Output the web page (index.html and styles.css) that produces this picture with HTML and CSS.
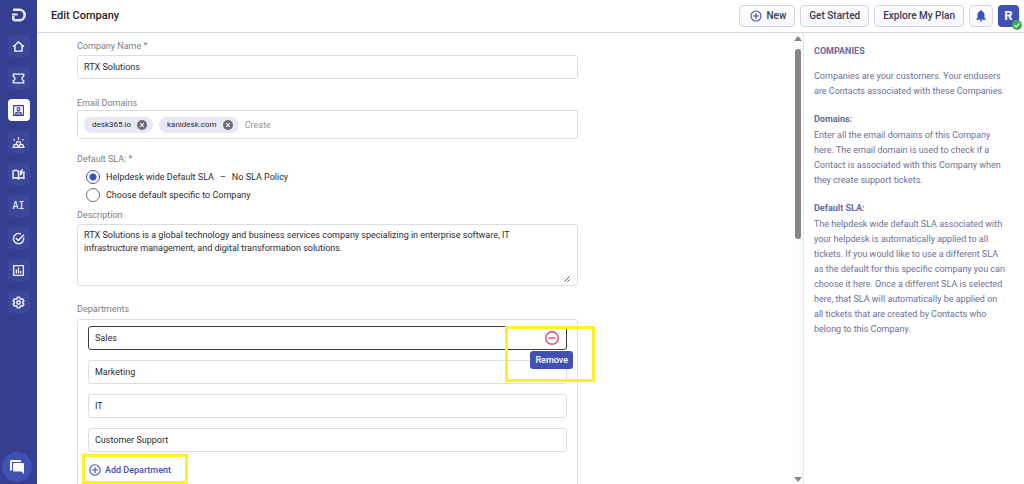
FILE: index.html
```html
<!DOCTYPE html>
<html lang="en">
<head>
<meta charset="utf-8">
<title>Edit Company</title>
<link rel="stylesheet" href="styles.css">
</head>
<body>
<nav class="rail" aria-label="Main">
  <a class="logo" href="#" aria-label="Home page"><svg width="16" height="16" viewBox="0 0 16 16" fill="none" stroke="#e8ecff"><path d="M2 2.800H8.500A5.200 5.200 0 0 1 8.500 13.200H4.500" stroke-width="2.600"/><path d="M1 7.500h5.500" stroke-width="2"/><path d="M2.200 9v2.500q0 1.700 2.600 1.700" stroke-width="2.400"/></svg></a>
  <a class="item" href="#" aria-label="Dashboard"><svg viewBox="0 0 24 24" fill="none" stroke="currentColor" stroke-width="2.600"><path d="M2 12.500 12 3.500l10 9M5.500 10v10.500h13V10"/></svg></a>
  <a class="item" href="#" aria-label="Tickets"><svg viewBox="0 0 24 24" fill="none" stroke="currentColor" stroke-width="2.600"><path d="M2.500 4h19v4c-4 1-4 7 0 8v4h-19v-4c4-1 4-7 0-8z"/></svg></a>
  <a class="item active" href="#" aria-label="Contacts"><svg viewBox="0 0 24 24" fill="none" stroke="currentColor" stroke-width="2"><path d="M3 3h18v18H3z"/><circle cx="12" cy="9.500" r="2.800"/><path d="M6 18.500c1-5 11-5 12 0z"/></svg></a>
  <a class="item" href="#" aria-label="Assets"><svg viewBox="0 0 24 24" fill="none" stroke="currentColor" stroke-width="2.200"><path d="M2 21l2-5h6l2 5zM12 21l2-5h6l2 5zM7.500 15l1.500-4h6l1.500 4M12 7V2M5 8 3 6M19 8l2-2"/></svg></a>
  <a class="item" href="#" aria-label="Knowledge base"><svg viewBox="0 0 24 24" fill="none" stroke="currentColor" stroke-width="2.600"><path d="M12 20V6C9 4 5 4 2 5.500V19c3-1.200 7-1.200 10 1 3-2.200 7-2.200 10-1V6"/><path d="M14.500 15V6l5-5v9z" fill="currentColor" stroke="none"/></svg></a>
  <a class="item ai" href="#">AI</a>
  <a class="item" href="#" aria-label="Tasks"><svg viewBox="0 0 24 24" fill="none" stroke="currentColor" stroke-width="2.600"><path d="M21.500 10.500A9.500 9.500 0 1 1 16.500 3.700M7 11l4.500 4.500L22 5"/></svg></a>
  <a class="item" href="#" aria-label="Reports"><svg viewBox="0 0 24 24" fill="none" stroke="currentColor" stroke-width="2.400"><path d="M3 3h18v18H3zM8 17.500V10M12 17.500V6.500M16 17.500V13"/></svg></a>
  <a class="item" href="#" aria-label="Settings"><svg viewBox="0 0 24 24" fill="none" stroke="currentColor" stroke-width="2.600" stroke-linejoin="round"><path d="M9.800 2h4.400l.6 3 2 1.200 2.900-1 2.200 3.800-2.300 2v2l2.300 2-2.200 3.800-2.900-1-2 1.200-.6 3H9.800l-.6-3-2-1.200-2.900 1L2.100 15l2.300-2v-2L2.100 9l2.200-3.800 2.900 1 2-1.200z"/><circle cx="12" cy="12" r="3.200"/></svg></a>
  <button class="chat" type="button" aria-label="Chat"><svg width="14" height="14" viewBox="0 0 14 14" fill="#fff"><path d="M1 0h9q1 0 1 1v1H2v8L0 11V1q0-1 1-1zM4 3h9q1 0 1 1v10l-2.500-2.500H4q-1 0-1-1V4q0-1 1-1z"/></svg></button>
</nav>
<div class="page">
  <header class="top">
    <h1>Edit Company</h1>
    <button class="btn" type="button"><svg width="12" height="12" viewBox="0 0 12 12" fill="none" stroke="#3f51b5" stroke-width="1.100"><circle cx="6" cy="6" r="5"/><path d="M6 3v6M3 6h6"/></svg>New</button>
    <button class="btn" type="button">Get Started</button>
    <button class="btn" type="button">Explore My Plan</button>
    <button class="btn bell" type="button" aria-label="Notifications"><svg width="10" height="12" viewBox="0 0 10 12" fill="#3f51b5"><path d="M5 0a.9.9 0 0 1 .9.900v.4C7.600 1.700 8.500 3.200 8.500 5v2.800L9.800 9v.7H.2V9l1.300-1.200V5c0-1.800.9-3.300 2.600-3.700v-.4A.9.9 0 0 1 5 0zM3.800 10.300h2.400a1.200 1.200 0 0 1-2.400 0z"/></svg></button>
    <button class="avatar" type="button">R<svg class="status" width="10" height="10" viewBox="0 0 10 10"><circle cx="5" cy="5" r="5" fill="#3fae49"/><path d="M2.500 5.200 4.300 7l3.200-3.600" fill="none" stroke="#fff" stroke-width="1.200"/></svg></button>
  </header>
  <div class="body">
    <main class="scroll">
      <form class="form">
        <label for="name">Company Name *</label>
        <input class="field" id="name" type="text" value="RTX Solutions">
        <label for="domains">Email Domains</label>
        <div class="chips">
          <span class="chip">desk365.io<button type="button" aria-label="Remove desk365.io"><svg width="10" height="10" viewBox="0 0 10 10"><circle cx="5" cy="5" r="5" fill="#6d6d78"/><path d="m3.200 3.200 3.600 3.600m0-3.600L3.200 6.800" stroke="#ececf6" stroke-width="1.200"/></svg></button></span>
          <span class="chip">kanidesk.com<button type="button" aria-label="Remove kanidesk.com"><svg width="10" height="10" viewBox="0 0 10 10"><circle cx="5" cy="5" r="5" fill="#6d6d78"/><path d="m3.200 3.200 3.600 3.600m0-3.600L3.200 6.800" stroke="#ececf6" stroke-width="1.200"/></svg></button></span>
          <input id="domains" type="text" placeholder="Create">
        </div>
        <fieldset class="sla">
          <legend>Default SLA: *</legend>
          <label class="choice"><input type="radio" name="sla" checked><span>Helpdesk wide Default SLA</span><span>–</span><span>No SLA Policy</span></label>
          <label class="choice"><input type="radio" name="sla"><span>Choose default specific to Company</span></label>
        </fieldset>
        <label for="desc">Description</label>
        <div class="area"><textarea id="desc">RTX Solutions is a global technology and business services company specializing in enterprise software, IT
infrastructure management, and digital transformation solutions.</textarea>
        <svg class="grip" width="6" height="6" viewBox="0 0 6 6" stroke="#555" stroke-width="1"><path d="M.5 5.500l5-5M3.500 5.500l2-2"/></svg></div>
        <fieldset class="departments">
          <legend>Departments</legend>
          <div class="list">
            <div class="row">
              <input class="field current" type="text" aria-label="Department 1" value="Sales">
              <div class="callout"></div>
              <button class="minus" type="button" aria-label="Remove Sales"><svg width="14" height="14" viewBox="0 0 14 14" fill="none" stroke="#e0457b" stroke-width="1.400"><circle cx="7" cy="7" r="6.200"/><path d="M3.500 7h7"/></svg></button>
              <span class="tip" role="tooltip">Remove</span>
            </div>
            <input class="field" type="text" aria-label="Department 2" value="Marketing">
            <input class="field" type="text" aria-label="Department 3" value="IT">
            <input class="field" type="text" aria-label="Department 4" value="Customer Support">
            <button class="add" type="button"><svg width="12" height="12" viewBox="0 0 12 12" fill="none" stroke="#3f51b5" stroke-width="1.100"><circle cx="6" cy="6" r="5.200"/><path d="M6 3v6M3 6h6"/></svg>Add Department</button>
          </div>
        </fieldset>
      </form>
    </main>
    <div class="bar" aria-hidden="true"><i class="up"></i><i class="thumb"></i><i class="down"></i></div>
    <aside class="help">
      <h2>COMPANIES</h2>
      <p>Companies are your customers. Your endusers are Contacts associated with these Companies.</p>
      <h3>Domains:</h3>
      <p>Enter all the email domains of this Company here. The email domain is used to check if a Contact is associated with this Company when they create support tickets.</p>
      <h3>Default SLA:</h3>
      <p>The helpdesk wide default SLA associated with your helpdesk is automatically applied to all tickets. If you would like to use a different SLA as the default for this specific company you can choose it here. Once a different SLA is selected here, that SLA will automatically be applied on all tickets that are created by Contacts who belong to this Company.</p>
    </aside>
  </div>
</div>
</body>
</html>
```

FILE: styles.css
```css
* { box-sizing: border-box; }
body { margin: 0; height: 100vh; display: flex; overflow: hidden; background: #fff; color: #2b2b2f; font: 9px/14px Roboto, sans-serif; }
button, input, textarea { font: inherit; color: inherit; margin: 0; padding: 0; border: 0; background: none; outline: 0; }
svg { display: block; flex: none; }
.rail { flex: none; width: 37px; background: #343f91; display: flex; flex-direction: column; align-items: center; padding: 7px 0 2px; gap: 10px; }
.logo { margin-bottom: 2px; }
.item { width: 22px; height: 22px; border-radius: 4px; background: #3b479a; color: #f2f4ff; display: flex; align-items: center; justify-content: center; text-decoration: none; }
.item svg { width: 13px; height: 13px; }
.active { background: #fff; color: #343f91; }
.ai { font: 10px/14px "DejaVu Sans Mono", monospace; }
.chat { width: 30px; height: 30px; flex: none; border-radius: 50%; background: #3f51b5; margin: auto 4px 0 0; display: flex; align-items: center; justify-content: center; }
.page { flex: 1; min-width: 0; display: flex; flex-direction: column; }
.top { flex: none; height: 33px; border-bottom: 1px solid #d6d6da; display: flex; align-items: center; gap: 5px; padding: 0 5px 0 14px; font-size: 10px; }
h1 { margin: 0 auto 0 0; font-size: 11px; line-height: 16px; font-weight: 500; color: #1f1f24; }
.btn { height: 22px; padding: 0 8px; border: 1px solid #d5d5e0; border-radius: 4px; background: linear-gradient(#fff, #f6f6fc); font-weight: 500; display: flex; align-items: center; gap: 4px; color: #363a52; }
.btn svg { margin-left: 2px; }
.bell { padding: 0 6px 0 4px; }
.avatar { position: relative; width: 21px; height: 22px; border-radius: 4px; background: #3f51b5; color: #fff; font-size: 13px; font-weight: 700; }
.status { position: absolute; right: -3px; bottom: -3px; }
.body { flex: 1; min-height: 0; display: flex; }
.scroll { flex: 1; min-width: 0; overflow: hidden; padding: 6px 20px 0 40px; }
.form { max-width: 501px; display: flex; flex-direction: column; color: #2b2b2f; }
.form > label, legend { color: #7d7d82; padding: 0; }
.field { width: 100%; height: 24px; border: 1px solid #dedee2; border-radius: 3px; padding: 0 6px; display: block; }
.form > .field { margin: 2px 0 17px; }
.chips { border: 1px solid #dedee2; border-radius: 3px; height: 29px; padding: 0 6px; display: flex; align-items: center; gap: 6px; }
.chips input { flex: 1; min-width: 0; }
.chips input::placeholder { color: #97979b; opacity: 1; }
.chip { height: 16px; border-radius: 8px; background: #e8e8f3; padding: 0 6px 0 8px; display: flex; align-items: center; gap: 6px; font-size: 8px; }
fieldset { margin: 0; padding: 0; border: 0; min-width: 0; }
.sla { margin: 13px 0 4px; }
.sla legend { margin-bottom: 2px; }
.choice { display: flex; align-items: center; gap: 6px; height: 18px; padding-left: 9px; }
.choice input { appearance: none; width: 14px; height: 14px; border: 1px solid #707074; border-radius: 50%; }
.choice input:checked { border: 1px solid #3f51b5; background: radial-gradient(#3f51b5 0 3px, #fff 4px); }
.area { position: relative; margin-top: 2px; }
textarea { display: block; width: 100%; height: 62px; border: 1px solid #dedee2; border-radius: 3px; padding: 4px 6px; resize: none; line-height: 13px; }
.grip { position: absolute; right: 8px; bottom: 4px; }
.departments { margin-top: 16px; }
.list { margin-top: 3px; border: 1px solid #dedee2; border-radius: 3px; padding: 6px 10px; display: flex; flex-direction: column; align-items: flex-start; gap: 10px; }
.row { position: relative; width: 100%; }
.current { border-color: #3b3b40; }
.callout { position: absolute; z-index: 1; top: 0; right: -28px; width: 90px; height: 56px; border: 3px solid #fff02a; }
.minus { position: absolute; z-index: 2; right: 8px; top: 5px; }
.tip { position: absolute; z-index: 2; right: -6px; top: 25px; padding: 2px 5px; background: #3f51b5; color: #fff; font-weight: 500; border-radius: 3px; }
.add { margin: -8px 0 0 -6px; height: 30px; padding: 1px 14px 0 4px; border: 3px solid #fff02a; color: #3f51b5; font-weight: 500; display: flex; align-items: center; gap: 4px; }
.bar { flex: none; width: 11px; background: #fcfcfc; display: flex; flex-direction: column; align-items: center; padding: 3px 0 2px; }
.up, .down { border: 4px solid transparent; border-top: 0; border-bottom: 5px solid #858585; }
.down { margin-top: auto; border-bottom: 0; border-top: 5px solid #858585; }
.thumb { width: 6px; height: 190px; margin-top: 8px; border-radius: 3px; background: #858585; }
.help { flex: none; width: 221px; border-left: 1px solid #e6e6ea; padding: 11px 18px 0 10px; color: #6c7096; line-height: 15px; }
h2, h3 { margin: 0; font-size: 9px; line-height: 14px; font-weight: 700; color: #666b96; }
.help p { margin: 2px 0 13px; }
.help h2 + p { margin-top: 11px; }
```
